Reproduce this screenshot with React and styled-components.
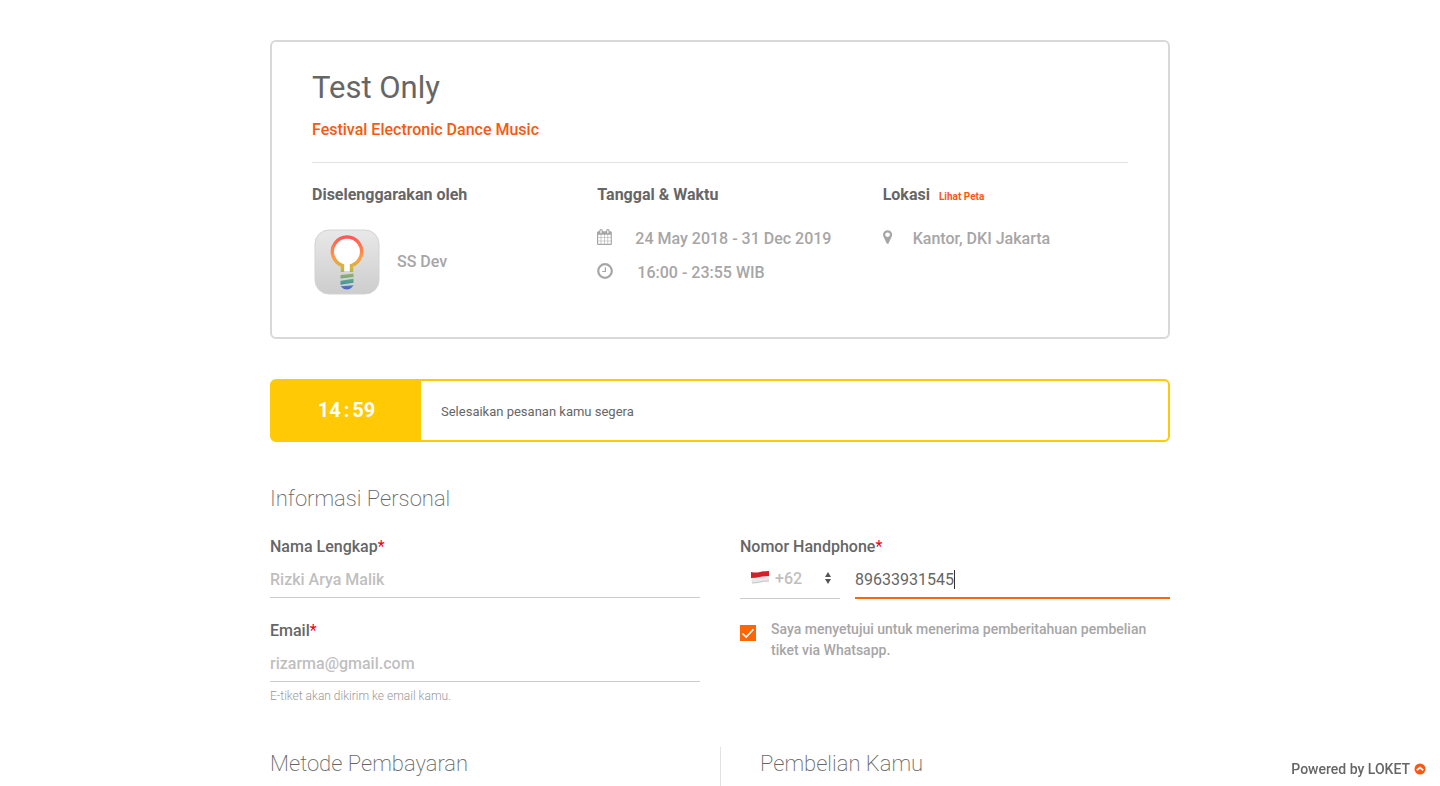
import React from "react";
import styled, { createGlobalStyle } from "styled-components";

const GlobalStyle = createGlobalStyle`
  * { box-sizing: border-box; }
  body {
    margin: 0;
    background: #fff;
    color: #666;
    font-family: Roboto, "Liberation Sans", sans-serif;
    font-size: 16px;
    line-height: 24px;
    font-weight: 500;
  }
  h1, h2, h3, p, ul { margin: 0; padding: 0; }
  input, select, button { font: inherit; }
`;

const Page = styled.main`
  width: 100%;
  max-width: 940px;
  margin: 0 auto;
  padding: 40px 20px 0;
`;

const EventCard = styled.section`
  border: 2px solid #d8d8d8;
  border-radius: 6px;
  padding: 26px 40px 40px;
`;

const EventHeader = styled.header`
  border-bottom: 1px solid #e2e2e2;
  padding-bottom: 20px;
  margin-bottom: 20px;
`;

const Title = styled.h1`
  font-size: 31px;
  line-height: 40px;
  font-weight: 400;
`;

const Category = styled.p`
  margin-top: 10px;
  color: #f9580e;
`;

const Details = styled.div`
  display: grid;
  grid-template-columns: repeat(3, 1fr);
  column-gap: 40px;
`;

const DetailTitle = styled.h2`
  display: flex;
  align-items: baseline;
  gap: 9px;
  margin-bottom: 20px;
  font-size: 16px;
  line-height: 24px;
  font-weight: 700;
`;

const MapLink = styled.a`
  color: #f9580e;
  font-size: 10px;
  line-height: 12px;
  font-weight: 700;
  text-decoration: none;
`;

const Organizer = styled.div`
  display: flex;
  align-items: center;
  gap: 15px;
  color: #a6a6a6;
`;

const InfoList = styled.ul`
  display: flex;
  flex-direction: column;
  gap: 10px;
  list-style: none;
  color: #a6a6a6;
`;

const InfoItem = styled.li`
  display: flex;
  align-items: center;
  gap: ${(p) => p.$gap}px;
  svg { flex: none; margin-bottom: 4px; }
`;

const TimerBar = styled.section`
  display: flex;
  margin-top: 40px;
  border: 2px solid #ffc905;
  border-radius: 6px;
  background: #fff;
`;

const Countdown = styled.div`
  display: flex;
  justify-content: center;
  gap: 3px;
  width: 149px;
  padding: 17px 0 18px;
  background: #ffc905;
  color: #fff;
  font-size: 20px;
  font-weight: 700;
`;

const TimerText = styled.p`
  padding: 19px 20px 16px;
  font-size: 13px;
  font-weight: 400;
`;

const SectionTitle = styled.h2`
  font-size: 22px;
  line-height: 32px;
  font-weight: 200;
`;

const PersonalSection = styled.section`
  margin-top: 41px;
`;

const FormGrid = styled.form`
  display: grid;
  grid-template-columns: 1fr 1fr;
  column-gap: 40px;
  margin-top: 20px;
`;

const FormColumn = styled.div`
  display: flex;
  flex-direction: column;
  gap: ${(p) => p.$gap}px;
`;

const Field = styled.div`
  display: flex;
  flex-direction: column;
`;

const Label = styled.label`
  line-height: 24px;
`;

const Required = styled.span`
  color: #f00014;
  font-weight: 400;
`;

const TextInput = styled.input`
  width: 100%;
  height: 39px;
  padding: 3px 0 0;
  border: 0;
  border-bottom: ${(p) => (p.$active ? "2px solid #f96706" : "1px solid #ccc")};
  border-radius: 0;
  outline: none;
  background: transparent;
  color: ${(p) => (p.$active ? "#666" : "#bfbfbf")};
  font-weight: ${(p) => (p.$active ? 400 : 500)};
`;

const Hint = styled.p`
  margin-top: 4px;
  color: #999;
  font-size: 12px;
  line-height: 20px;
  font-weight: 300;
`;

const PhoneRow = styled.div`
  display: grid;
  grid-template-columns: 100px 1fr;
  column-gap: 15px;
`;

const CodeBox = styled.div`
  position: relative;
`;

const CodeSelect = styled.select`
  display: block;
  width: 100%;
  height: 40px;
  padding: 1px 24px 0 35px;
  appearance: none;
  border: 0;
  border-bottom: 1px solid #ccc;
  border-radius: 0;
  background: transparent;
  color: #bfbfbf;
`;

const Flag = styled.svg`
  position: absolute;
  left: 10px;
  top: 11px;
`;

const Arrows = styled.svg`
  position: absolute;
  right: 8px;
  top: 13px;
`;

const NumberBox = styled.div`
  position: relative;
  ${TextInput} { height: 40px; }
`;

const Caret = styled.span`
  position: absolute;
  left: 99px;
  top: 11px;
  width: 1px;
  height: 19px;
  background: #333;
`;

const Consent = styled.label`
  display: flex;
  gap: 15px;
  padding-right: 20px;
  color: #a6a6a6;
  font-size: 14px;
  line-height: 21px;
`;

const CheckBox = styled.span`
  position: relative;
  flex: none;
  width: 16px;
  height: 16px;
  margin-top: 6px;
  input {
    display: block;
    width: 16px;
    height: 16px;
    margin: 0;
    appearance: none;
    background: #fff;
    border: 1px solid #ccc;
  }
  input:checked { background: #f96706; border-color: #f96706; }
  svg { position: absolute; inset: 0; pointer-events: none; }
`;

const Checkout = styled.div`
  display: grid;
  grid-template-columns: 1fr 1fr;
  margin-top: 41px;
`;

const CheckoutColumn = styled.section`
  padding: 1px 0 6px;
  & + & {
    border-left: 1px solid #e2e2e2;
    padding-left: 39px;
  }
`;

const PoweredBy = styled.footer`
  position: fixed;
  right: 14px;
  bottom: 5px;
  display: flex;
  align-items: center;
  gap: 4px;
  font-size: 14px;
`;

function OrganizerLogo() {
  return (
    <svg width="70" height="70" viewBox="0 0 70 70" role="img" aria-label="SS Dev logo">
      <defs>
        <linearGradient id="tile" x1="0" y1="0" x2="0" y2="1">
          <stop offset="0" stopColor="#e8e8e8" />
          <stop offset="1" stopColor="#cdcdcd" />
        </linearGradient>
        <linearGradient id="bulb" gradientUnits="userSpaceOnUse" x1="0" y1="9" x2="0" y2="62">
          <stop offset="0" stopColor="#ff5658" />
          <stop offset="0.42" stopColor="#ff9c45" />
          <stop offset="0.61" stopColor="#cdb83c" />
          <stop offset="0.76" stopColor="#83ad78" />
          <stop offset="0.88" stopColor="#4c9a99" />
          <stop offset="1" stopColor="#4961dc" />
        </linearGradient>
      </defs>
      <rect x="3" y="3" width="64" height="64" rx="14" fill="url(#tile)" stroke="#d3d3d3" />
      <path d="M30.5 44V37.5A14.5 14.5 0 1 1 39.5 37.5V44Z" fill="#fff" />
      <path
        d="M30.5 45V38.5A14.6 14.6 0 1 1 39.5 38.5V45"
        fill="none"
        stroke="url(#bulb)"
        strokeWidth="3.4"
      />
      <path d="M28.5 48L41.5 46.5V50L28.500 51.500ZM28.500 53.700L41.500 51.700V55.700L28.500 57.700ZM28.500 59.200L41.500 58.200Q38.500 62.500 35 62.500T28.500 59.200Z" fill="url(#bulb)" />
    </svg>
  );
}

function CalendarIcon() {
  return (
    <svg width="16" height="16" viewBox="64 0 1792 1792" fill="currentColor" aria-hidden="true">
      <path d="M192 1664h288v-288h-288v288zM544 1664h320v-288h-320v288zM192 1312h288v-320h-288v320zM544 1312h320v-320h-320v320zM192 928h288v-288h-288v288zM928 1664h320v-288h-320v288zM544 928h320v-288h-320v288zM1312 1664h288v-288h-288v288zM928 1312h320v-320h-320v320zM576 448v-288q0-13-9.500-22.500t-22.500-9.500h-64q-13 0-22.500 9.500t-9.500 22.500v288q0 13 9.500 22.500t22.500 9.500h64q13 0 22.500-9.500t9.500-22.500zM1312 1312h288v-320h-288v320zM928 928h320v-288h-320v288zM1312 928h288v-288h-288v288zM1344 448v-288q0-13-9.500-22.500t-22.500-9.500h-64q-13 0-22.500 9.500t-9.500 22.500v288q0 13 9.500 22.500t22.500 9.500h64q13 0 22.500-9.500t9.500-22.500zM1728 384v1280q0 52-38 90t-90 38h-1408q-52 0-90-38t-38-90v-1280q0-52 38-90t90-38h128v-96q0-66 47-113t113-47h64q66 0 113 47t47 113v96h384v-96q0-66 47-113t113-47h64q66 0 113 47t47 113v96h128q52 0 90 38t38 90z" />
    </svg>
  );
}

function ClockIcon() {
  return (
    <svg width="16" height="16" viewBox="0 0 16 16" fill="none" stroke="currentColor" aria-hidden="true">
      <circle cx="8" cy="8" r="6.8" strokeWidth="2.2" />
      <path d="M8.4 4.2V8.5H5.2" strokeWidth="1.2" />
    </svg>
  );
}

function MarkerIcon() {
  return (
    <svg width="10" height="16" viewBox="384 0 1120 1792" fill="currentColor" aria-hidden="true">
      <path d="M1152 640q0-106-75-181t-181-75-181 75-75 181 75 181 181 75 181-75 75-181zm256 0q0 109-33 179l-364 774q-16 33-47.500 52t-67.500 19-67.500-19-46.500-52l-365-774q-33-70-33-179 0-212 150-362t362-150 362 150 150 362z" />
    </svg>
  );
}

export default function App() {
  return (
    <>
      <GlobalStyle />
      <Page>
        <EventCard>
          <EventHeader>
            <Title>Test Only</Title>
            <Category>Festival Electronic Dance Music</Category>
          </EventHeader>
          <Details>
            <div>
              <DetailTitle>Diselenggarakan oleh</DetailTitle>
              <Organizer>
                <OrganizerLogo />
                <span>SS Dev</span>
              </Organizer>
            </div>
            <div>
              <DetailTitle>Tanggal &amp; Waktu</DetailTitle>
              <InfoList>
                <InfoItem $gap={22}>
                  <CalendarIcon />
                  24 May 2018 - 31 Dec 2019
                </InfoItem>
                <InfoItem $gap={24}>
                  <ClockIcon />
                  16:00 - 23:55 WIB
                </InfoItem>
              </InfoList>
            </div>
            <div>
              <DetailTitle>
                Lokasi <MapLink href="#peta">Lihat Peta</MapLink>
              </DetailTitle>
              <InfoList>
                <InfoItem $gap={20}>
                  <MarkerIcon />
                  Kantor, DKI Jakarta
                </InfoItem>
              </InfoList>
            </div>
          </Details>
        </EventCard>

        <TimerBar>
          <Countdown role="timer">
            <span>14</span>
            <span>:</span>
            <span>59</span>
          </Countdown>
          <TimerText>Selesaikan pesanan kamu segera</TimerText>
        </TimerBar>

        <PersonalSection>
          <SectionTitle>Informasi Personal</SectionTitle>
          <FormGrid>
            <FormColumn $gap={21}>
              <Field>
                <Label htmlFor="name">
                  Nama Lengkap<Required>*</Required>
                </Label>
                <TextInput id="name" type="text" defaultValue="Rizki Arya Malik" />
              </Field>
              <Field>
                <Label htmlFor="email">
                  Email<Required>*</Required>
                </Label>
                <TextInput id="email" type="email" defaultValue="rizarma@gmail.com" />
                <Hint>E-tiket akan dikirim ke email kamu.</Hint>
              </Field>
            </FormColumn>
            <FormColumn $gap={20}>
              <Field>
                <Label htmlFor="phone">
                  Nomor Handphone<Required>*</Required>
                </Label>
                <PhoneRow>
                  <CodeBox>
                    <CodeSelect aria-label="Kode negara" defaultValue="62">
                      <option value="62">+62</option>
                    </CodeSelect>
                    <Flag width="20" height="14" viewBox="0 0 20 14" aria-hidden="true">
                      <path d="M1 2Q6 3 10 2T19 1V11Q14 11 10 12T2 13Z" fill="#e8e8e8" />
                      <path d="M1 2Q6 3 10 2T19 1V6Q14 6 10 7T1 8Z" fill="#d5202b" />
                      <path d="M2 13Q6 13 10 12T19 11" fill="none" stroke="#c4c4c4" />
                    </Flag>
                    <Arrows width="8" height="12" viewBox="0 0 8 12" aria-hidden="true">
                      <path d="M4 0L7 5H1ZM4 12L1 7H7Z" fill="#555" />
                    </Arrows>
                  </CodeBox>
                  <NumberBox>
                    <TextInput id="phone" type="tel" defaultValue="89633931545" $active />
                    <Caret />
                  </NumberBox>
                </PhoneRow>
              </Field>
              <Consent>
                <CheckBox>
                  <input type="checkbox" defaultChecked />
                  <svg width="16" height="16" viewBox="0 0 16 16" fill="none" stroke="#fff" strokeWidth="1.6">
                    <path d="M2.5 8.5L6.2 12L13.5 4.2" />
                  </svg>
                </CheckBox>
                <span>Saya menyetujui untuk menerima pemberitahuan pembelian tiket via Whatsapp.</span>
              </Consent>
            </FormColumn>
          </FormGrid>
        </PersonalSection>

        <Checkout>
          <CheckoutColumn>
            <SectionTitle>Metode Pembayaran</SectionTitle>
          </CheckoutColumn>
          <CheckoutColumn>
            <SectionTitle>Pembelian Kamu</SectionTitle>
          </CheckoutColumn>
        </Checkout>
      </Page>
      <PoweredBy>
        Powered by LOKET
        <svg width="12" height="12" viewBox="0 0 12 12" aria-hidden="true">
          <circle cx="6" cy="6" r="5.5" fill="#f9580e" />
          <path d="M2.8 7.2L6 4.600L9.200 7.200" fill="none" stroke="#fff" strokeWidth="1.8" />
        </svg>
      </PoweredBy>
    </>
  );
}
